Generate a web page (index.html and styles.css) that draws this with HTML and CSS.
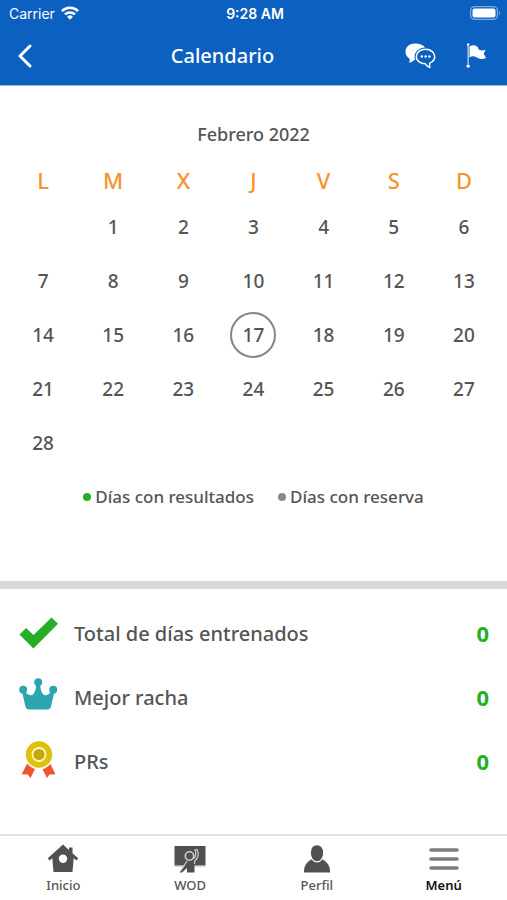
FILE: index.html
```html
<!DOCTYPE html>
<html lang="es">
<head>
<meta charset="utf-8">
<meta name="viewport" content="width=device-width, initial-scale=1">
<title>Calendario</title>
<link rel="stylesheet" href="styles.css">
</head>
<body>
<header class="header">
  <div class="status">
    <div class="carrier">Carrier
      <svg width="18" height="14" viewBox="0 0 18 14" fill="none" stroke="#fff" stroke-width="2.5" aria-hidden="true"><path d="M.9 5.1a11.5 11.5 0 0 1 16.2 0M4 8.4a7.2 7.2 0 0 1 10 0"/><path d="M9 13.8 6.1 10.7a4.2 4.2 0 0 1 5.8 0z" fill="#fff" stroke="none"/></svg>
    </div>
    <div class="clock">9:28 AM</div>
    <svg class="battery" width="31" height="14" viewBox="0 0 31 14" aria-hidden="true"><rect x=".6" y=".6" width="26.800" height="12.800" rx="4" fill="none" stroke="#7fa9e0" stroke-width="1.200"/><rect x="2.500" y="2.500" width="23" height="9" rx="2.200" fill="#fff"/><path d="M29 4.500q2 2.500 0 5z" fill="#7fa9e0"/></svg>
  </div>
  <nav class="bar">
    <button class="icon-button back" aria-label="Volver"><svg width="16" height="24" viewBox="0 0 16 24" fill="none" stroke="#fff" stroke-width="3" stroke-linecap="round" stroke-linejoin="round"><path d="M14 2 4 12l10 10"/></svg></button>
    <h1>Calendario</h1>
    <div class="actions">
      <button class="icon-button" aria-label="Mensajes"><svg width="31" height="26" viewBox="0 0 31 26"><path d="M10 .5C4.500.5.500 4 .5 8.800c0 3 1.500 5.400 4 6.900.4 1.500.2 2.800-.4 4 2.300-.5 4-1.500 5-2.800l4 .1L20 4.500C18 1.900 14.500.5 10 .5z" fill="#fff"/><path d="M20.500 6.200c-5.200 0-9.200 3.200-9.200 7.300s3.900 7.200 9 7.300c1.200 1.800 2.600 3 4.600 3.700-.5-1.500-.5-2.900-.2-4.400 3.200-1.200 5-3.700 5-6.600 0-4.100-4-7.300-9.200-7.300z" fill="#0c60bf" stroke="#0c60bf" stroke-width="3.500"/><path d="M20.500 6.200c-5.200 0-9.200 3.200-9.200 7.300s3.900 7.200 9 7.300c1.200 1.800 2.600 3 4.600 3.700-.5-1.500-.5-2.900-.2-4.400 3.200-1.200 5-3.700 5-6.600 0-4.100-4-7.300-9.200-7.300z" fill="none" stroke="#fff" stroke-width="1.500" stroke-linejoin="round"/><g fill="#fff"><circle cx="16.800" cy="13.500" r="1.200"/><circle cx="20.600" cy="13.500" r="1.200"/><circle cx="24.400" cy="13.500" r="1.200"/></g></svg></button>
      <button class="icon-button" aria-label="Bandera"><svg width="21" height="26" viewBox="0 0 21 26" fill="#fff"><path d="M1.500 2h1.300v20H1.500z" fill="#c3d8f2"/><circle cx="2.200" cy="1.500" r="1.200"/><rect x=".5" y="22" width="3.400" height="2.400" rx="1"/><path d="M3.500 3.500c3-2 5.500-1.500 8.300.4l.9 2.600c2.500 1.300 4.500 1.300 7.100.1l-2.100 4.200 2.300 4.300c-3.300 1.500-6.800 1.300-9.600-.8-2.500-1.300-4.500-1.200-6.900.1z"/></svg></button>
    </div>
  </nav>
</header>
<main>
  <section class="calendar">
    <h2>Febrero 2022</h2>
    <table>
      <thead><tr><th>L</th><th>M</th><th>X</th><th>J</th><th>V</th><th>S</th><th>D</th></tr></thead>
      <tbody>
        <tr><td></td><td>1</td><td>2</td><td>3</td><td>4</td><td>5</td><td>6</td></tr>
        <tr><td>7</td><td>8</td><td>9</td><td>10</td><td>11</td><td>12</td><td>13</td></tr>
        <tr><td>14</td><td>15</td><td>16</td><td><span class="today">17</span></td><td>18</td><td>19</td><td>20</td></tr>
        <tr><td>21</td><td>22</td><td>23</td><td>24</td><td>25</td><td>26</td><td>27</td></tr>
        <tr><td>28</td><td></td><td></td><td></td><td></td><td></td><td></td></tr>
      </tbody>
    </table>
    <ul class="legend">
      <li class="results">Días con resultados</li>
      <li class="booked">Días con reserva</li>
    </ul>
  </section>
  <dl class="stats">
    <div class="stat">
      <svg width="40" height="40" viewBox="0 0 40 40" aria-hidden="true"><path d="m.5 21.500 6.600-6.500 7.400 7 18-17.500 6.500 6.300L14.500 35.500z" fill="#27ae27"/></svg>
      <dt>Total de días entrenados</dt><dd>0</dd>
    </div>
    <div class="stat">
      <svg width="40" height="40" viewBox="0 0 40 40" fill="#2da5b1" aria-hidden="true"><circle cx="4.200" cy="12.800" r="4"/><circle cx="19.200" cy="5.200" r="4"/><circle cx="34.200" cy="12.800" r="4"/><path d="M3 14.500 6.500 30q.6 2.400 3 2.400h19.400q2.400 0 3-2.400L35.500 14.500 32 15c-2.500 3.300-6.500 4.500-8.500 1.500-1.300-2.300-2-5-2.300-8h-4c-.3 3-1 5.700-2.300 8-2 3-6 1.800-8.500-1.500z"/></svg>
      <dt>Mejor racha</dt><dd>0</dd>
    </div>
    <div class="stat">
      <svg width="40" height="40" viewBox="0 0 40 40" aria-hidden="true"><path d="m8.500 22 8.500 4-5.500 11-2.800-3.500-6-.3z" fill="#f0552b"/><path d="m31 22-8.500 4L28 37l2.500-3.500 6-.3z" fill="#f0552b"/><circle cx="20" cy="14" r="14.500" fill="#fff"/><circle cx="20" cy="13.500" r="13.200" fill="#dec10b"/><circle cx="20" cy="13.500" r="6.500" fill="#c6a60c" stroke="#fff8c9" stroke-width="1.800"/></svg>
      <dt>PRs</dt><dd>0</dd>
    </div>
  </dl>
</main>
<nav class="tabs">
  <a href="#inicio"><svg width="32" height="30" viewBox="0 0 32 30" aria-hidden="true"><path fill-rule="evenodd" d="M16 .5 22 6V3.500h3.500v5.700l5.700 5-1.700 2.300-2.800-2.200L25.500 28H6.500L5.300 14.300l-2.800 2.200L.8 14.200zM16 10.500a4.200 4.200 0 1 0 0 8.400 4.200 4.200 0 0 0 0-8.400z" fill="#505050"/></svg>Inicio</a>
  <a href="#wod"><svg width="32" height="30" viewBox="0 0 32 30" aria-hidden="true"><path d="M.5 2h31v19.500H.5z" fill="#505050"/><path d="M.5 22h31" stroke="#aaa"/><path d="m5.500 28.500 7.500-10h7.500v10H13V24l-5 4.500z" fill="#505050"/><path d="m6.500 27 6.500-10M20.500 20l.2-3c3.500-3 4.500-7 2.300-11.500l-2 .5c1.700 3.500.7 6-1 8.500" fill="none" stroke="#cfcfcf" stroke-width="1.200"/><circle cx="15.500" cy="12" r="4.200" fill="#505050" stroke="#cfcfcf" stroke-width="1.600"/></svg>WOD</a>
  <a href="#perfil"><svg width="32" height="30" viewBox="0 0 32 30" aria-hidden="true"><path d="M3 28.500c-.3-6.500 2.500-10.500 8-13.500h10c5.500 3 8.300 7 8 13.500z" fill="#505050"/><path d="M16 .7c-4.200 0-6.700 3.300-6.700 8.100 0 5.500 3 9 6.700 9s6.700-3.500 6.700-9c0-4.800-2.500-8.100-6.700-8.100z" fill="#505050" stroke="#fff" stroke-width="1.200"/></svg>Perfil</a>
  <a href="#menu" aria-current="page"><svg width="32" height="30" viewBox="0 0 32 30" fill="none" stroke="#7d7d7d" stroke-width="3.500" stroke-linecap="round" aria-hidden="true"><path d="M3 6h26M3 15h26M3 24h26"/></svg>Menú</a>
</nav>
</body>
</html>
```
FILE: styles.css
```css
* { box-sizing: border-box; }

body {
  margin: 0;
  min-height: 100vh;
  display: flex;
  flex-direction: column;
  background: #fff;
  color: #555;
  font-family: "Noto Sans", sans-serif;
  font-weight: 500;
}

svg { display: block; }

h1, h2, ul, dl, dd { margin: 0; padding: 0; }

.header {
  background: #0c60bf;
  color: #fff;
  border-bottom: 1px solid #a3b4cc;
}

.status {
  display: grid;
  grid-template-columns: 1fr auto 1fr;
  align-items: center;
  height: 26px;
  padding: 0 6px 0 9px;
  font-family: Inter, sans-serif;
  font-size: 14px;
}

.carrier {
  display: flex;
  align-items: center;
  gap: 6px;
  font-weight: 400;
}

.clock { font-weight: 600; }

.battery { justify-self: end; }

.bar {
  display: grid;
  grid-template-columns: auto 1fr auto;
  align-items: center;
  height: 59px;
  padding: 0 20px 0 16px;
}

.bar h1 {
  font-size: 20px;
  font-weight: 500;
  text-align: center;
}

.icon-button {
  padding: 0;
  border: 0;
  background: none;
  cursor: pointer;
}

.back { padding-right: 8px; }

.actions {
  display: flex;
  justify-content: flex-end;
  gap: 30px;
}

.calendar {
  padding: 32px 8px 72px;
  border-bottom: 8px solid #d8d8d8;
}

.calendar h2 {
  font-size: 18px;
  font-weight: 500;
  line-height: 32px;
  text-align: center;
}

.calendar table {
  width: 100%;
  table-layout: fixed;
  border-collapse: collapse;
}

.calendar th {
  height: 50px;
  padding: 12px 0 2px;
  color: #f7922d;
  font-size: 22px;
  font-weight: 500;
  line-height: 36px;
}

.calendar td {
  height: 54px;
  padding: 0;
  font-size: 19px;
  text-align: center;
}

.today {
  display: inline-block;
  width: 46px;
  border: 2px solid #858585;
  border-radius: 50%;
  line-height: 42px;
}

.legend {
  display: flex;
  justify-content: center;
  gap: 24px;
  padding-top: 15px;
  list-style: none;
  font-size: 17px;
  line-height: 24px;
}

.legend li {
  display: flex;
  align-items: center;
  gap: 4px;
}

.legend li::before {
  content: "";
  width: 8px;
  height: 8px;
  border-radius: 50%;
}

.results::before { background: #27ae27; }
.booked::before { background: #8a8a8a; }

.stats { padding: 12px 18px; }

.stat {
  display: flex;
  align-items: center;
  gap: 16px;
  height: 64px;
  font-size: 20px;
}

.stat svg { margin-left: 1px; margin-right: -1px; }

.stat dd {
  margin-left: auto;
  color: #27ae27;
  font-size: 22px;
  font-weight: 700;
}

.tabs {
  display: grid;
  grid-template-columns: repeat(4, 1fr);
  margin-top: auto;
  padding: 8px 0 4px;
  border-top: 2px solid #e2e2e2;
}

.tabs a {
  display: flex;
  flex-direction: column;
  align-items: center;
  color: #555;
  font-size: 13px;
  line-height: 22px;
  text-decoration: none;
}

.tabs a[aria-current] {
  color: #111;
  font-weight: 600;
}
```
